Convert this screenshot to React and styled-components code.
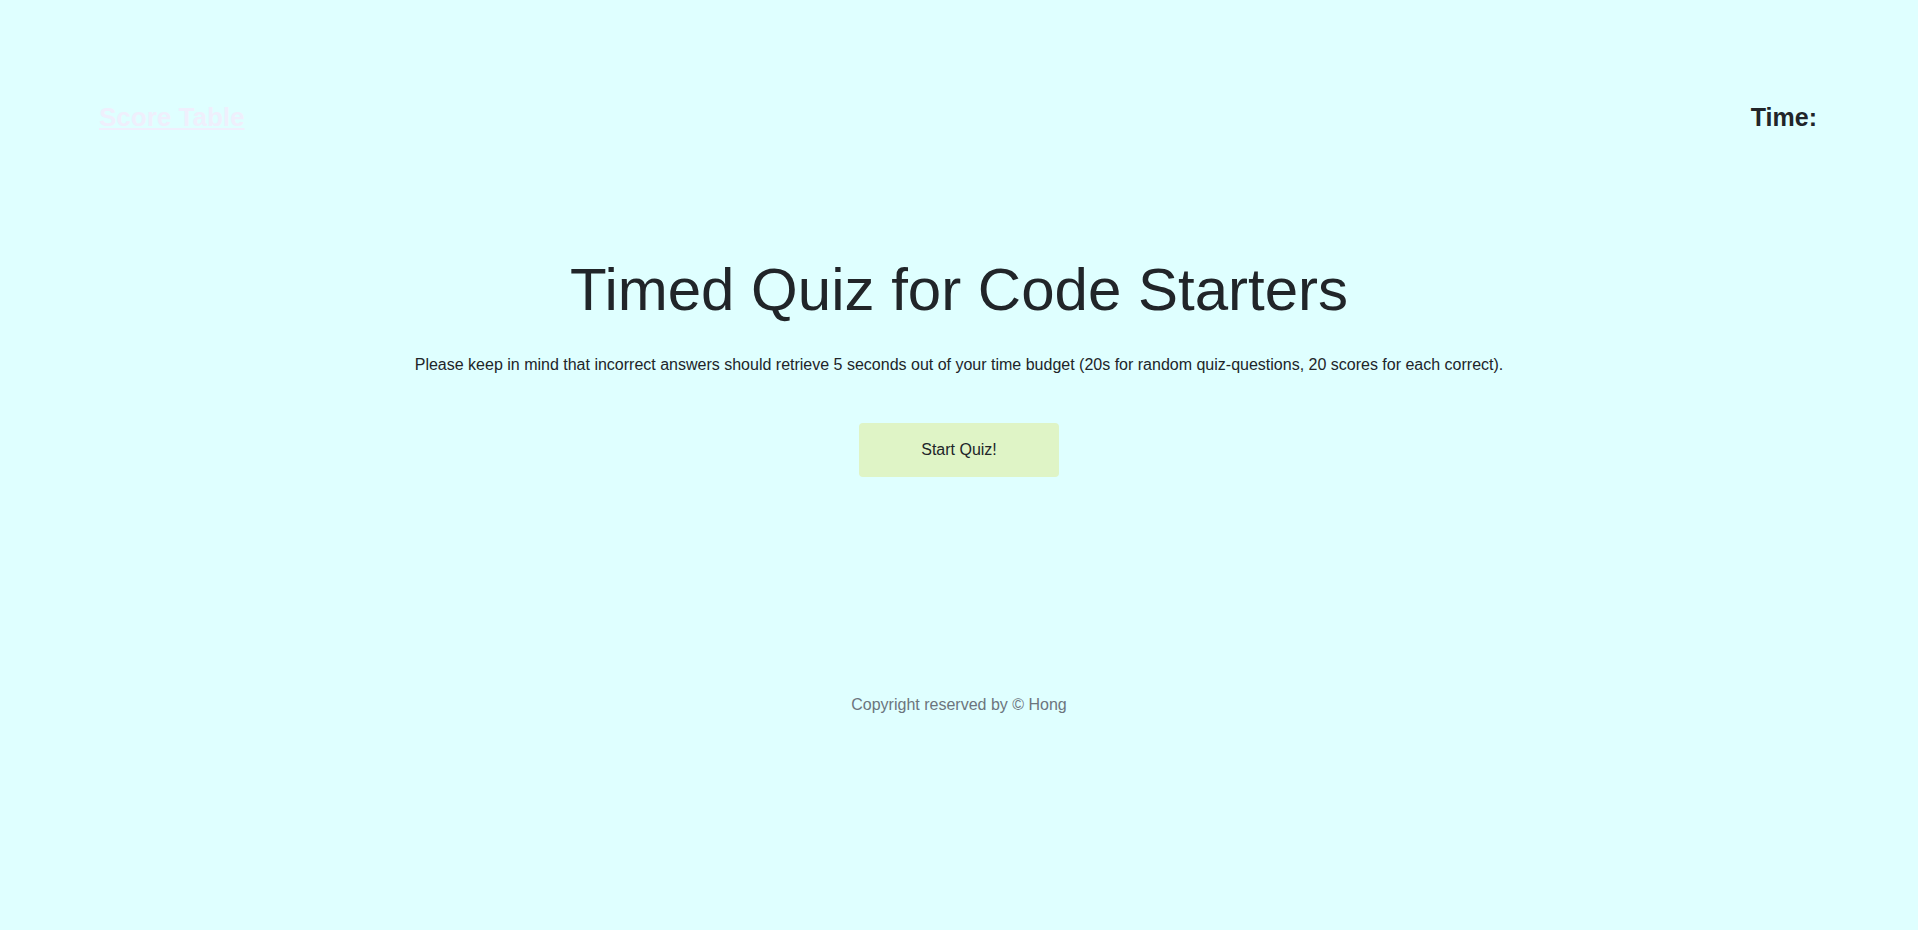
import React from 'react';
import styled, { createGlobalStyle } from 'styled-components';

const GlobalStyle = createGlobalStyle`
  html, body {
    margin: 0;
    padding: 0;
    background: #dfffff;
  }
  body {
    font-family: 'Liberation Sans', Arial, sans-serif;
    color: #212529;
    min-height: 930px;
  }
`;

const App = () => {
  return (
    <Page>
      <GlobalStyle />
      <Header>
        <ScoreLink href="#scores">Score Table</ScoreLink>
        <Timer>Time:</Timer>
      </Header>
      <Main>
        <Title>Timed Quiz for Code Starters</Title>
        <Lead>
          Please keep in mind that incorrect answers should retrieve 5 seconds out of
          your time budget (20s for random quiz-questions, 20 scores for each correct).
        </Lead>
        <StartButton type="button">Start Quiz!</StartButton>
      </Main>
      <Footer>Copyright reserved by © Hong</Footer>
    </Page>
  );
};

const Page = styled.div`
  min-height: 930px;
  background: #dfffff;
`;

const Header = styled.header`
  display: flex;
  justify-content: space-between;
  align-items: center;
  padding: 102px 101px 0 99px;
`;

const ScoreLink = styled.a`
  font-size: 26px;
  line-height: 30px;
  font-weight: 700;
  color: #efeffc;
  text-decoration: underline;
  text-decoration-thickness: 2px;
  text-underline-offset: 2px;
`;

const Timer = styled.h3`
  margin: 0;
  font-size: 25px;
  line-height: 30px;
  font-weight: 700;
  color: #212529;
`;

const Main = styled.main`
  display: flex;
  flex-direction: column;
  align-items: center;
  text-align: center;
  padding-top: 122px;
`;

const Title = styled.h1`
  margin: 0;
  font-size: 60px;
  line-height: 72px;
  font-weight: 300;
  color: #212529;
`;

const Lead = styled.p`
  margin: 27px 0 0;
  font-size: 16px;
  line-height: 24px;
  color: #212529;
`;

const StartButton = styled.button`
  margin-top: 46px;
  width: 200px;
  height: 54px;
  border: none;
  border-radius: 4px;
  background: #dff4c6;
  font-family: 'Liberation Sans', Arial, sans-serif;
  font-size: 16px;
  color: #212529;
  cursor: pointer;
`;

const Footer = styled.footer`
  margin-top: 216px;
  text-align: center;
  font-size: 16px;
  line-height: 24px;
  color: #6c757d;
`;

export default App;
